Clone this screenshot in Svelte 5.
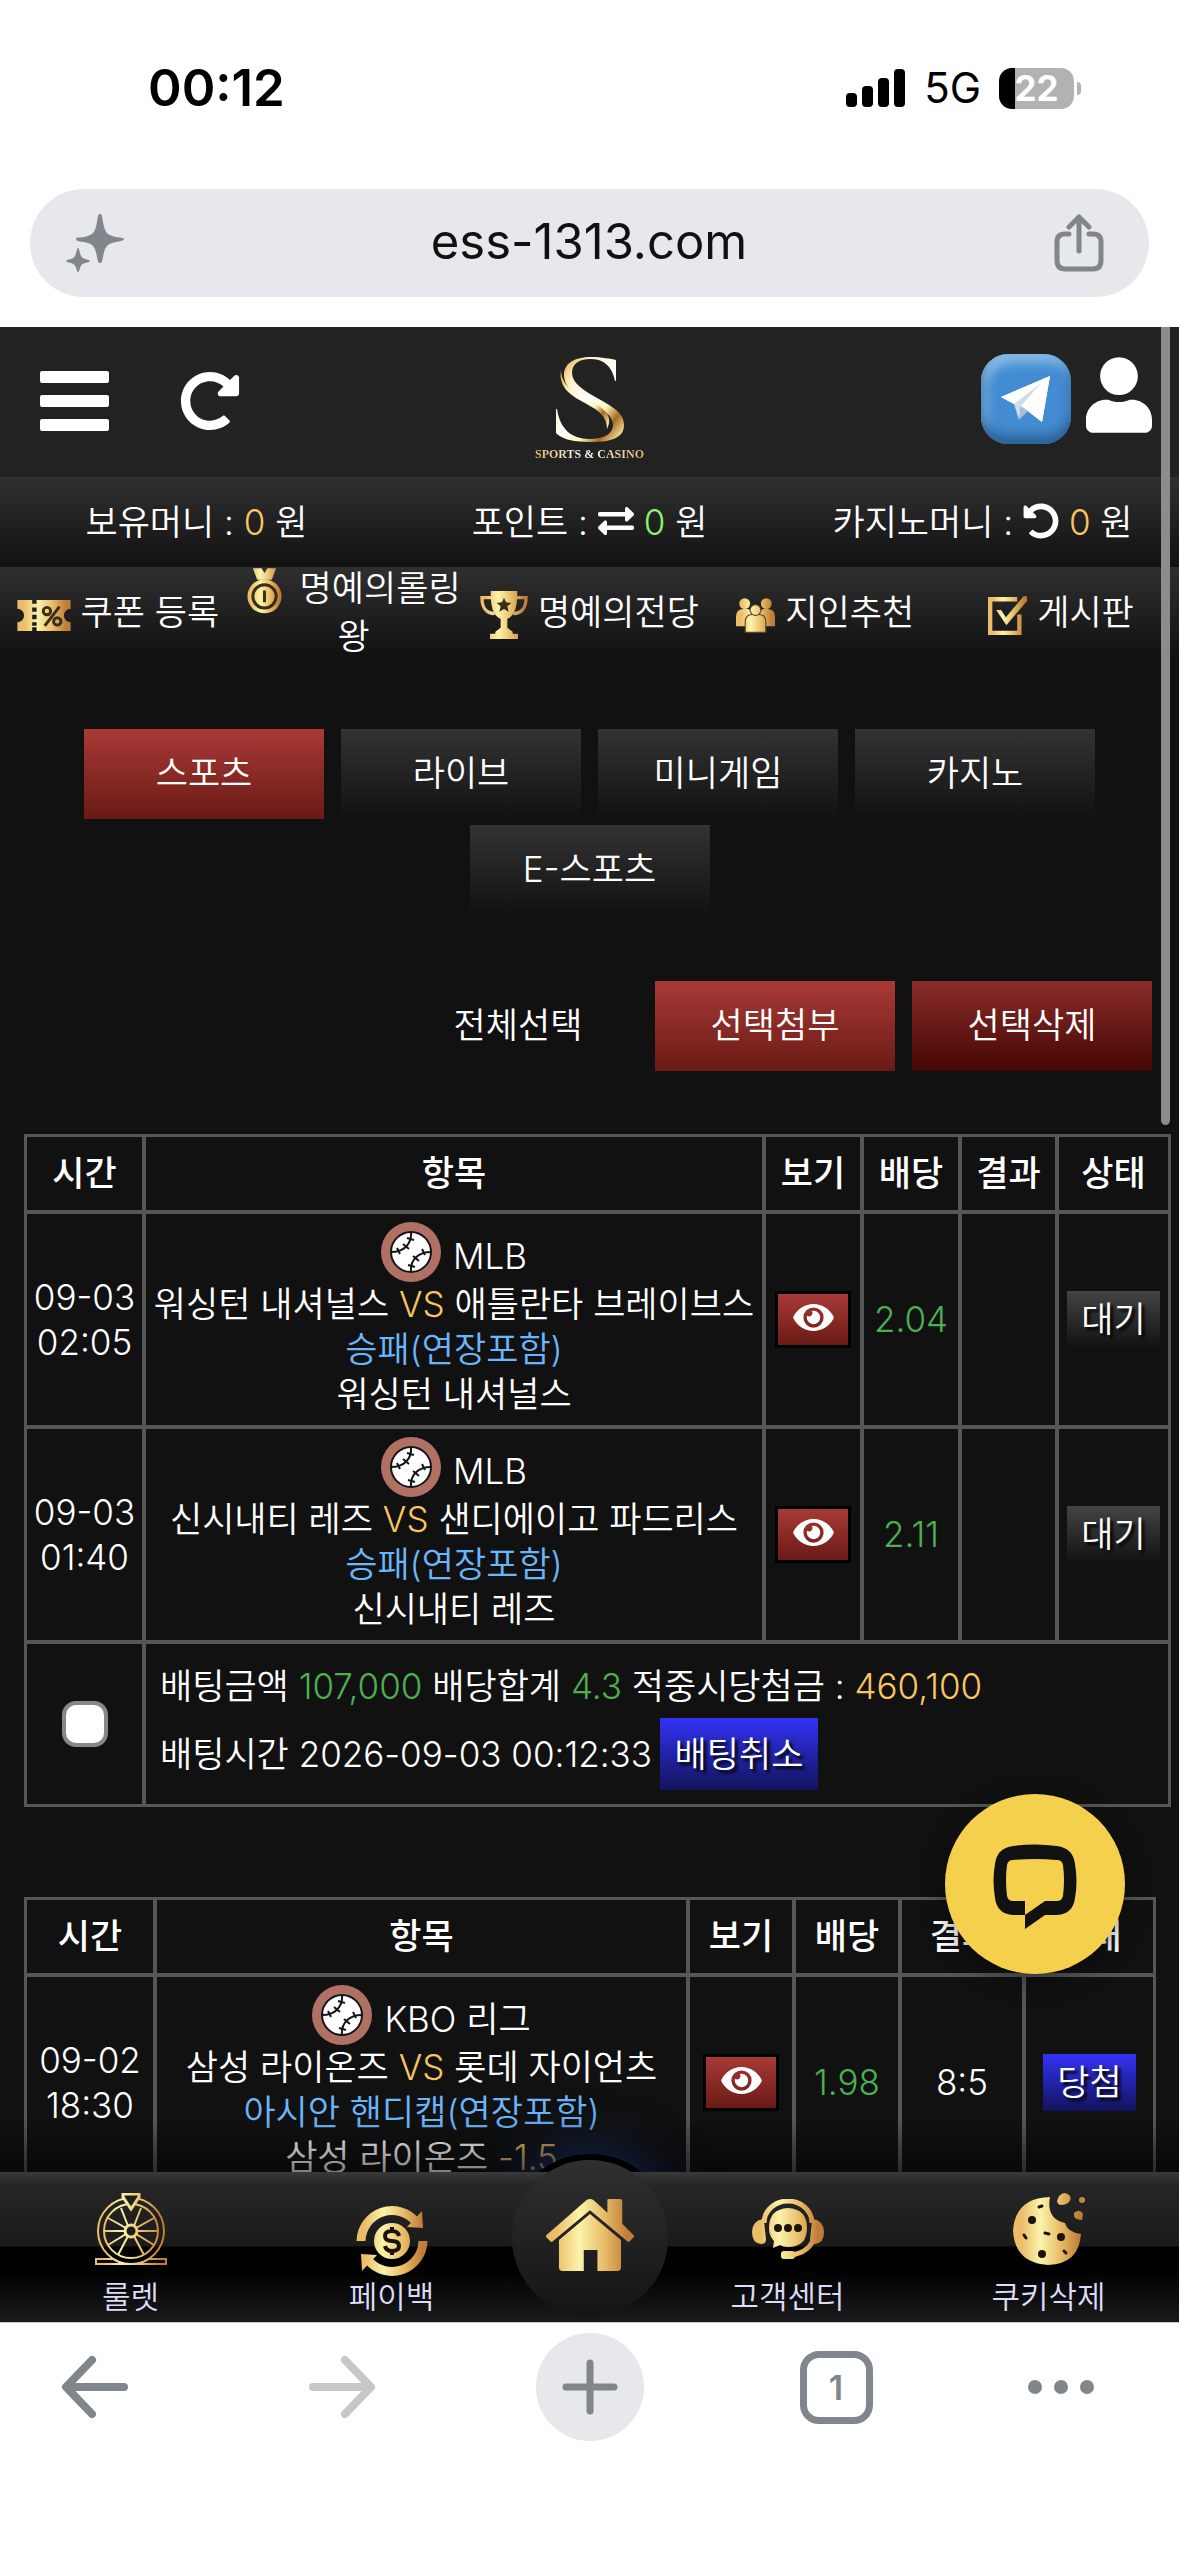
<script>
  const money = [
    { label: '보유머니 :', icon: '', value: '0', tone: 'gold' },
    { label: '포인트 :', icon: 'exchange', value: '0', tone: 'lime' },
    { label: '카지노머니 :', icon: 'undo', value: '0', tone: 'gold' }
  ];
  const menu = [
    { label: '쿠폰 등록', icon: 'coupon' },
    { label: '명예의롤링왕', icon: 'medal' },
    { label: '명예의전당', icon: 'trophy' },
    { label: '지인추천', icon: 'people' },
    { label: '게시판', icon: 'board' }
  ];
  const tabs = ['스포츠', '라이브', '미니게임', '카지노', 'E-스포츠'];
  let active = $state('스포츠');
  let picked = $state(false);

  const heads = [
    ['time', '시간'],
    ['item', '항목'],
    ['view', '보기'],
    ['odds', '배당'],
    ['result', '결과'],
    ['state', '상태']
  ];
  const slips = [
    {
      kind: 'open',
      rows: [
        { day: '09-03', hour: '02:05', league: 'MLB', home: '워싱턴 내셔널스', away: '애틀란타 브레이브스', market: '승패(연장포함)', pick: '워싱턴 내셔널스', line: '', odds: '2.04', result: '', state: '대기', tone: 'wait' },
        { day: '09-03', hour: '01:40', league: 'MLB', home: '신시내티 레즈', away: '샌디에이고 파드리스', market: '승패(연장포함)', pick: '신시내티 레즈', line: '', odds: '2.11', result: '', state: '대기', tone: 'wait' }
      ],
      total: { stake: '107,000', odds: '4.3', payout: '460,100', at: '2026-09-03 00:12:33' }
    },
    {
      kind: 'settled',
      rows: [
        { day: '09-02', hour: '18:30', league: 'KBO 리그', home: '삼성 라이온즈', away: '롯데 자이언츠', market: '아시안 핸디캡(연장포함)', pick: '삼성 라이온즈', line: '-1.5', odds: '1.98', result: '8:5', state: '당첨', tone: 'win' }
      ],
      total: null
    }
  ];
</script>

{#snippet undoIcon()}
  <svg class="i36" viewBox="0 0 512 512" aria-hidden="true"><path fill="#fff" d="M255.545 8c-66.269.119-126.438 26.233-170.86 68.685L48.971 40.971C33.851 25.851 8 36.559 8 57.941V192c0 13.255 10.745 24 24 24h134.059c21.382 0 32.09-25.851 16.971-40.971l-41.75-41.75c30.864-28.899 70.801-44.907 113.23-45.273 92.398-.798 170.283 73.977 169.484 169.442C423.236 348.009 349.816 424 256 424c-41.127 0-79.997-14.678-110.629-41.556-4.743-4.161-11.906-3.908-16.368.553L89.34 422.659c-4.872 4.872-4.631 12.815.482 17.433C133.798 479.813 192.074 504 256 504c136.966 0 247.999-111.033 248-247.998C504.001 119.193 392.354 7.755 255.545 8z" /></svg>
{/snippet}

{#snippet exchangeIcon()}
  <svg class="i36" viewBox="0 0 512 512" aria-hidden="true"><path fill="#fff" d="M0 168v-16c0-13.255 10.745-24 24-24h360V80c0-21.367 25.899-32.042 40.971-16.971l80 80c9.372 9.373 9.372 24.569 0 33.941l-80 80C409.956 271.982 384 261.456 384 240v-48H24c-13.255 0-24-10.745-24-24zm488 152H128v-48c0-21.314-25.862-32.08-40.971-16.971l-80 80c-9.372 9.373-9.372 24.569 0 33.941l80 80C102.057 463.997 128 453.437 128 432v-48h360c13.255 0 24-10.745 24-24v-16c0-13.255-10.745-24-24-24z" /></svg>
{/snippet}

{#snippet menuIcon(name)}
  {#if name === 'coupon'}
    <svg class="coupon" viewBox="0 0 72 42" aria-hidden="true">
      <path fill="url(#gold)" fill-rule="evenodd" d="M0 0h20v5h6V0h46v12a9 9 0 0 0 0 18v12H26v-5h-6v5H0V30a9 9 0 0 0 0-18zM20 10v6h6v-6zm0 10v6h6v-6zm0 10v5h6v-5z" />
      <g fill="none" stroke="#3a2c17" stroke-width="4"><circle cx="40" cy="15" r="5" /><circle cx="54" cy="29" r="5" /><path d="M57 9 37 35" /></g>
    </svg>
  {:else if name === 'medal'}
    <svg class="medal" viewBox="0 0 72 94" aria-hidden="true">
      <path fill="url(#gold)" d="M12 0h18l6 10 6-10h18l-9 24H21z" />
      <circle cx="36" cy="58" r="35" fill="url(#gold)" />
      <circle cx="36" cy="58" r="24" fill="none" stroke="#3a2c17" stroke-width="6" />
      <path stroke="#3a2c17" stroke-width="6" d="M36 46v24" />
    </svg>
  {:else if name === 'trophy'}
    <svg class="trophy" viewBox="0 0 72 72" aria-hidden="true">
      <path fill="none" stroke="url(#gold)" stroke-width="5" d="M18 10H3c0 16 6 23 19 24M54 10h15c0 16-6 23-19 24" />
      <path fill="url(#gold)" d="M16 0h40c0 24-3 36-15 42v13l8 6v3h8v8H15v-8h8v-3l8-6V42C19 36 16 24 16 0z" />
      <path fill="#3a2c17" d="m36 10 3 7 8 1-6 5 2 8-7-4-7 4 2-8-6-5 8-1z" />
    </svg>
  {:else if name === 'people'}
    <svg class="people" viewBox="0 0 72 64" aria-hidden="true">
      <g fill="url(#gold)"><circle cx="16" cy="10" r="10" /><circle cx="56" cy="10" r="10" /><path d="M0 52V34q0-14 14-14h6q8 0 8 10v22zM72 52V34q0-14-14-14h-6q-8 0-8 10v22z" /></g>
      <g fill="url(#gold)" stroke="#5b4320" stroke-width="2"><path d="M17 63V44q0-14 13-14h12q13 0 13 14v19z" /><circle cx="36" cy="22" r="10" /></g>
    </svg>
  {:else}
    <svg class="board" viewBox="0 0 72 72" aria-hidden="true">
      <path fill="none" stroke="url(#gold)" stroke-width="8" d="M58 34v34H4V6h50" />
      <path fill="url(#gold)" d="M15 26h9l9 13L66 0l6 1v8L34 54z" />
    </svg>
  {/if}
{/snippet}

{#snippet ball()}
  <svg class="ball" viewBox="0 0 60 60" aria-hidden="true">
    <circle cx="30" cy="30" r="30" fill="#b07164" />
    <circle cx="30" cy="30" r="20" fill="#fff" stroke="#151515" stroke-width="2" />
    <path fill="none" stroke="#151515" stroke-width="2" d="M30 10c1 12-7 20-20 20M30 50c-1-12 7-20 20-20M26 16l7 2M22 22l6 5M16 26l3 6M27 43l7 2M32 34l6 5M41 27l3 6" />
  </svg>
{/snippet}

{#snippet eye()}
  <svg class="eye" viewBox="0 64 576 384" aria-hidden="true"><path fill="#fff" d="M572.52 241.4C518.29 135.59 410.93 64 288 64S57.68 135.64 3.48 241.41a32.35 32.35 0 0 0 0 29.19C57.71 376.41 165.07 448 288 448s230.32-71.64 284.52-177.41a32.35 32.35 0 0 0 0-29.19zM288 400a144 144 0 1 1 144-144 143.93 143.93 0 0 1-144 144zm0-240a95.31 95.31 0 0 0-25.31 3.79 47.85 47.85 0 0 1-66.9 66.9A95.78 95.78 0 1 0 288 160z" /></svg>
{/snippet}

<svg class="defs" width="0" height="0" aria-hidden="true">
  <defs>
    <linearGradient id="gold" gradientUnits="userSpaceOnUse" x1="0" y1="0" x2="72" y2="0">
      <stop offset="0.12" stop-color="#ebbd69" />
      <stop offset="0.38" stop-color="#fbf3ab" />
      <stop offset="0.66" stop-color="#e8bc67" />
      <stop offset="0.92" stop-color="#bf7d38" />
    </linearGradient>
  </defs>
</svg>

<div class="phone">
  <header class="status">
    <time>00:12</time>
    <div class="signals">
      <svg width="60" height="38" viewBox="0 0 60 38" aria-hidden="true"><rect y="24" width="11" height="14" rx="4" /><rect x="16" y="17" width="11" height="21" rx="4" /><rect x="32" y="9" width="11" height="29" rx="4" /><rect x="48" width="11" height="38" rx="4" /></svg>
      <span class="net">5G</span>
      <span class="battery"><span>22</span></span>
    </div>
  </header>

  <div class="address">
    <button aria-label="AI">
      <svg width="58" height="58" viewBox="0 0 58 58" aria-hidden="true"><path fill="#80868b" d="M34 0c2 0 2 2 3 8 2 11 4 13 13 15 6 1 8 1 8 2s-2 2-8 3c-9 2-11 4-13 15-1 4-1 6-3 6s-2-2-3-6c-2-11-4-13-13-15-6-1-8-1-8-3s2-1 8-2c9-2 11-4 13-15 1-6 1-8 3-8zM12 34c1 0 1 2 2 5 1 4 2 5 5 6s5 1 5 2-2 1-5 2-4 2-5 5-1 4-2 4-1-2-2-4c-1-3-2-4-5-5s-5-1-5-2 2-1 5-2 4-2 5-6c1-3 1-5 2-5z" /></svg>
    </button>
    <span>ess-1313.com</span>
    <button aria-label="공유">
      <svg width="50" height="58" viewBox="0 0 50 58" fill="none" stroke="#80868b" stroke-width="5" stroke-linecap="round" stroke-linejoin="round" aria-hidden="true"><path d="M15 20h-4q-8 0-8 8v18q0 9 8 9h28q8 0 8-9V28q0-8-8-8h-4M25 37V4M15 13 25 3l10 10" /></svg>
    </button>
  </div>

  <main class="site">
    <header class="top">
      <div class="left">
        <button aria-label="메뉴">
          <svg width="70" height="60" viewBox="0 0 70 60" fill="#fff" aria-hidden="true"><rect width="69" height="12" rx="2" /><rect y="24" width="69" height="12" rx="2" /><rect y="48" width="69" height="12" rx="2" /></svg>
        </button>
        <button aria-label="새로고침">
          <svg width="60" height="60" viewBox="0 0 512 512" aria-hidden="true"><path fill="#fff" d="M256.455 8c66.269.119 126.437 26.233 170.859 68.685l35.715-35.715C478.149 25.851 504 36.559 504 57.941V192c0 13.255-10.745 24-24 24H345.941c-21.382 0-32.09-25.851-16.971-40.971l41.75-41.75c-30.864-28.899-70.801-44.907-113.23-45.273-92.398-.798-170.283 73.977-169.484 169.442C88.764 348.009 162.184 424 256 424c41.127 0 79.997-14.678 110.629-41.556 4.743-4.161 11.906-3.908 16.368.553l39.662 39.662c4.872 4.872 4.631 12.815-.482 17.433C378.202 479.813 319.926 504 256 504 119.034 504 8.001 392.967 8 256.002 7.999 119.193 119.646 7.755 256.455 8z" /></svg>
        </button>
      </div>
      <a class="logo" href="#home">
        <svg width="80" height="90" viewBox="0 0 80 90" aria-hidden="true">
          <defs>
            <linearGradient id="logoGold" x1="0" y1="0" x2="1" y2="1">
              <stop offset="0.1" stop-color="#e9b65c" /><stop offset="0.25" stop-color="#fff3c9" /><stop offset="0.5" stop-color="#fff" /><stop offset="0.66" stop-color="#fff6c0" /><stop offset="0.8" stop-color="#a86b25" /><stop offset="0.95" stop-color="#fbe9a0" />
            </linearGradient>
          </defs>
          <g fill="url(#logoGold)">
            <path d="M66 5v21h-1C62 11 54 4 40 4 29 4 22 9 22 18c0 10 11 17 25 25 15 8 27 15 27 27 0 13-13 17-33 17C20 87 11 83 6 78V54h1c3 19 13 30 33 30 13 0 23-5 23-14 0-9-10-16-24-23C25 39 14 32 14 20 14 8 25 2 41 2c11 0 20 2 25 3z" />
            <path d="M11 15C8 33 22 41 35 48c14 8 22 13 22 26 7-13-3-21-18-29C25 38 11 30 11 15z" />
          </g>
        </svg>
        <span>SPORTS &amp; CASINO</span>
      </a>
      <div class="right">
        <a class="telegram" href="#telegram" aria-label="텔레그램">
          <svg width="50" height="46" viewBox="0 0 50 46" aria-hidden="true"><path fill="#fff" d="M0 21 49 0 41 46 27 35z" /><path fill="#cfdcea" d="M0 21 40 7 20 30l-2 14-5-16z" /><path fill="#fff" d="M0 21 49 0 13 28zM20 30 49 0 41 46z" /><path fill="#a9bfd4" d="m20 30 7 5-9 9z" /></svg>
        </a>
        <a href="#mypage" aria-label="내 정보">
          <svg width="66" height="76" viewBox="0 0 448 512" aria-hidden="true"><path fill="#fff" d="M224 256c70.7 0 128-57.3 128-128S294.7 0 224 0 96 57.3 96 128s57.3 128 128 128zm89.6 32h-16.7c-22.2 10.2-46.9 16-72.9 16s-50.6-5.8-72.9-16h-16.7C60.2 288 0 348.2 0 422.4V464c0 26.5 21.5 48 48 48h352c26.5 0 48-21.5 48-48v-41.6c0-74.2-60.2-134.4-134.4-134.4z" /></svg>
        </a>
      </div>
    </header>

    <div class="money">
      {#each money as m}
        <div>
          {m.label}
          {#if m.icon === 'exchange'}{@render exchangeIcon()}{:else if m.icon === 'undo'}{@render undoIcon()}{/if}
          <span class={m.tone}>{m.value}</span>
          원
        </div>
      {/each}
    </div>

    <nav class="menu">
      {#each menu as m}
        <a href="#{m.icon}"><span>{@render menuIcon(m.icon)} {m.label}</span></a>
      {/each}
    </nav>

    <div class="tabs">
      {#each tabs as t}
        <button class="tab" class:active={t === active} onclick={() => (active = t)}>{t}</button>
      {/each}
    </div>

    <div class="actions">
      <button class="tab plain">전체선택</button>
      <button class="tab active">선택첨부</button>
      <button class="tab danger">선택삭제</button>
    </div>

    {#each slips as slip}
      <table class={slip.kind}>
        <thead>
          <tr>
            {#each heads as [key, name]}<th class={key} scope="col">{name}</th>{/each}
          </tr>
        </thead>
        <tbody>
          {#each slip.rows as r}
            <tr>
              <td>{r.day}<br />{r.hour}</td>
              <td>
                <div class="league">{@render ball()}<span>{r.league}</span></div>
                <div class="line">{r.home} <span class="gold">VS</span> {r.away}</div>
                <div class="line blue">{r.market}</div>
                <div class="line">{r.pick} <span class="gold">{r.line}</span></div>
              </td>
              <td><button class="view-btn" aria-label="보기">{@render eye()}</button></td>
              <td class="green">{r.odds}</td>
              <td>{r.result}</td>
              <td><span class="badge {r.tone}">{r.state}</span></td>
            </tr>
          {/each}
          {#if slip.total}
            <tr class="total">
              <td><input type="checkbox" aria-label="배팅 선택" bind:checked={picked} /></td>
              <td colspan="5">
                <div class="sum">배팅금액 <span class="green">{slip.total.stake}</span> 배당합계 <span class="green">{slip.total.odds}</span> 적중시당첨금 : <span class="gold">{slip.total.payout}</span></div>
                <div class="when">배팅시간 {slip.total.at} <button class="cancel">배팅취소</button></div>
              </td>
            </tr>
          {/if}
        </tbody>
      </table>
    {/each}

    <div class="scrollbar"></div>

    <button class="chat" aria-label="채팅 상담">
      <svg width="84" height="86" viewBox="0 0 84 86" aria-hidden="true"><path fill="#111" fill-rule="evenodd" d="M20 2q22-3 44 0 16 2 18 18 3 18 0 34-2 16-18 17H52L32 85V57H20q-5 0-6-5-2-16 0-31 1-5 6-5 22-2 44 0 5 0 6 5 2 15 0 31-1 5-6 5H52L32 71H20Q4 70 2 54-1 36 2 20 4 4 20 2z" /></svg>
    </button>

    <div class="dock">
      <div class="ring"></div>
      <nav class="bar">
        <a href="#roulette">
          <svg width="72" height="72" viewBox="0 0 72 72" fill="none" stroke="url(#gold)" stroke-width="2" aria-hidden="true">
            <path d="M1 66h17q18 11 36 0h17v5H1z" fill="#0a0a0a" />
            <circle cx="36" cy="38" r="33" /><circle cx="36" cy="38" r="27" /><circle cx="36" cy="38" r="6" stroke-width="3" />
            <path d="M42 38h21M9 38h21M41 41l18 11M31 35 13 25M39 43l10 19M33 43 23 62M41 35l18-10M31 41 13 52M39 33l7-18M33 33l-7-18" />
            <path d="M28 1h16v3l-8 12-8-12z" fill="#1c1c1c" stroke-width="3" />
          </svg>
          <span>룰렛</span>
        </a>
        <a href="#payback" class="low">
          <svg width="72" height="72" viewBox="0 0 72 72" aria-hidden="true">
            <g fill="none" stroke="url(#gold)" stroke-width="9"><path d="M5 36A31 31 0 0 1 60 17M67 36A31 31 0 0 1 12 55" /></g>
            <path fill="url(#gold)" d="m66 6 1 17-16-1zM6 66 5 49l16 1z" />
            <circle cx="36" cy="36" r="18" fill="url(#gold)" />
            <path fill="none" stroke="#1a1408" stroke-width="4" d="M43 31q-1-5-7-5-7 0-7 5t7 5 7 5-7 5q-6 0-7-5M36 22v5M36 45v5" />
          </svg>
          <span>페이백</span>
        </a>
        <a href="#home" class="home" aria-label="홈">
          <svg width="90" height="72" viewBox="0 0 72 58" aria-hidden="true">
            <path fill="url(#gold)" d="M33 1q3-2 6 0l11 10V1q0-1 1-1h9q2 0 2 2v18l9 9q1 1 0 2l-3 3q-1 1-2 0L36 9 6 34q-1 1-2 0l-3-3q-1-1 0-2z" />
            <path fill="url(#gold)" d="M36 12 61 33v22q0 3-3 3H42V41H31v17H14q-3 0-3-3V33z" />
          </svg>
        </a>
        <a href="#support" class="mid">
          <svg width="72" height="60" viewBox="0 0 72 60" aria-hidden="true">
            <path fill="none" stroke="url(#gold)" stroke-width="5" d="M12 24a24 22 0 0 1 48 0M61 42q-6 12-22 14" />
            <path fill="url(#gold)" d="M11 20Q0 22 0 33t9 12q5 0 5-5l-2-18zM61 20q11 2 11 13t-9 12q-5 0-5-5l2-18z" />
            <path fill="url(#gold)" d="M36 9q19 1 19 20T36 48q-5 0-8-2l-7 3 1-7q-5-5-5-13Q17 10 36 9z" />
            <rect x="29" y="52" width="14" height="8" rx="3" fill="url(#gold)" />
            <g fill="#1c1608"><circle cx="26" cy="29" r="4" /><circle cx="36" cy="29" r="4" /><circle cx="46" cy="29" r="4" /></g>
          </svg>
          <span>고객센터</span>
        </a>
        <a href="#cookies">
          <svg width="72" height="72" viewBox="0 0 72 72" aria-hidden="true">
            <path fill="url(#gold)" d="M37 4q-4 22 15 26 2 9 16 11-2 30-33 31Q2 70 0 38 2 5 37 4zM46 3q6-6 11 0 2 5-4 8-8 3-9-3zM61 20q6-5 9 1l-1 6q-9 0-8-7z" />
            <circle cx="69" cy="7" r="3" fill="#c58540" />
            <g fill="#1a1408"><circle cx="19" cy="27" r="4" /><circle cx="48" cy="44" r="4" /><circle cx="29" cy="61" r="4" /></g>
            <path stroke="#1a1408" stroke-width="3" stroke-linecap="round" d="m26 14 3-1M32 40l4 1M11 42l2 3M51 58l2 2" />
          </svg>
          <span>쿠키삭제</span>
        </a>
      </nav>
    </div>
  </main>

  <footer class="toolbar">
    <button aria-label="뒤로"><svg width="68" height="64" viewBox="0 0 68 64" fill="none" stroke="#80868b" stroke-width="8" stroke-linecap="round" stroke-linejoin="round" aria-hidden="true"><path d="M63 32H6M31 5 5 32l26 27" /></svg></button>
    <button aria-label="앞으로"><svg width="68" height="64" viewBox="0 0 68 64" fill="none" stroke="#c7c7c7" stroke-width="8" stroke-linecap="round" stroke-linejoin="round" aria-hidden="true"><path d="M5 32h57M37 5l26 27-26 27" /></svg></button>
    <button class="plus" aria-label="새 탭"><svg width="56" height="56" viewBox="0 0 56 56" stroke="#80868b" stroke-width="7" stroke-linecap="round" aria-hidden="true"><path d="M28 4v48M4 28h48" /></svg></button>
    <button class="count" aria-label="탭 1개">1</button>
    <button aria-label="더보기"><svg width="68" height="16" viewBox="0 0 68 16" fill="#80868b" aria-hidden="true"><circle cx="8" cy="8" r="7" /><circle cx="34" cy="8" r="7" /><circle cx="60" cy="8" r="7" /></svg></button>
  </footer>
</div>

<style>
  :global(body) {
    margin: 0;
    background: #fff;
  }
  .defs {
    position: absolute;
  }
  .phone {
    display: flex;
    flex-direction: column;
    height: 100vh;
    overflow: hidden;
    background: #fff;
    font-family: 'Inter', 'Noto Sans CJK KR', sans-serif;
  }
  .phone :global(svg) {
    flex: none;
  }
  button {
    padding: 0;
    border: 0;
    background: none;
    color: inherit;
    font: inherit;
  }
  a {
    color: inherit;
    text-decoration: none;
  }

  .status {
    display: flex;
    justify-content: space-between;
    align-items: center;
    padding: 56px 105px 69px 148px;
    line-height: 64px;
  }
  .status time {
    font-size: 51px;
    font-weight: 600;
  }
  .signals {
    display: flex;
    align-items: center;
    gap: 18px;
  }
  .net {
    font-size: 42px;
    font-weight: 400;
  }
  .battery {
    position: relative;
    display: flex;
    justify-content: center;
    width: 75px;
    border-radius: 13px;
    background: linear-gradient(90deg, #000 22%, #b2b2b2 22%);
    color: #fff;
    font-size: 35px;
    font-weight: 700;
    line-height: 41px;
  }
  .battery::after {
    content: '';
    position: absolute;
    left: 78px;
    top: 14px;
    width: 4px;
    height: 13px;
    border-radius: 0 4px 4px 0;
    background: #b2b2b2;
  }
  .address {
    display: flex;
    justify-content: space-between;
    align-items: center;
    height: 108px;
    margin: 0 30px 30px;
    padding: 0 45px 0 36px;
    border-radius: 54px;
    background: #e7e8ec;
    color: #111;
    font-size: 49px;
  }
  .address button {
    display: flex;
  }
  .address span {
    padding-bottom: 4px;
  }

  .site {
    position: relative;
    flex: 1;
    min-height: 0;
    overflow: hidden;
    background: #111;
    color: #fff;
    font-family: 'Inter', 'Noto Sans CJK KR', sans-serif;
    font-size: 35px;
    font-weight: 350;
  }
  .gold {
    color: #f9c563;
  }
  .lime {
    color: #86f56c;
  }
  .green {
    color: #4caf50;
  }
  .blue {
    color: #6ab6fa;
  }

  .top {
    display: grid;
    grid-template-columns: 1fr auto 1fr;
    height: 150px;
    background: #222;
  }
  .left {
    display: flex;
    align-items: center;
    gap: 70px;
    padding: 0 0 2px 40px;
  }
  .left button {
    display: flex;
  }
  .logo {
    display: flex;
    flex-direction: column;
    align-items: center;
    padding-top: 28px;
  }
  .logo span {
    background: linear-gradient(90deg, #e4b462, #fff 45%, #e4b462);
    background-clip: text;
    color: transparent;
    font-family: 'Liberation Serif', serif;
    font-size: 12px;
    font-weight: 700;
    line-height: 18px;
    white-space: nowrap;
  }
  .right {
    display: flex;
    justify-content: flex-end;
    align-items: flex-start;
    gap: 15px;
    padding: 27px 27px 0 0;
  }
  .right a {
    display: flex;
  }
  .right .telegram {
    align-items: center;
    justify-content: center;
    width: 90px;
    height: 90px;
    border-radius: 27px;
    background: #448cd1;
    box-shadow: inset 0 -8px 12px #2a5f95, inset 5px 8px 12px #8fc0ea;
  }
  .right a:last-child {
    padding-top: 3px;
  }

  .money {
    display: grid;
    grid-template-columns: repeat(3, 1fr);
    background: linear-gradient(#303030, #111);
    line-height: 90px;
    text-align: center;
    white-space: nowrap;
  }
  .i36 {
    width: 36px;
    height: 36px;
    vertical-align: -4px;
  }
  .menu {
    display: grid;
    grid-template-columns: repeat(5, 1fr);
    grid-template-rows: 90px;
    background: linear-gradient(#2f2f2f, #111);
    line-height: 48px;
    text-align: center;
  }
  .menu a {
    display: flex;
    align-items: center;
    justify-content: center;
    min-width: 0;
  }
  .menu svg {
    margin-block: -12px;
    vertical-align: middle;
  }
  .coupon {
    width: 54px;
    height: 31px;
  }
  .medal {
    width: 35px;
    height: 46px;
    margin-right: 8px;
  }
  .trophy {
    width: 48px;
    height: 48px;
  }
  .people {
    width: 39px;
    height: 35px;
  }
  .board {
    width: 39px;
    height: 39px;
  }

  .tabs {
    display: flex;
    flex-wrap: wrap;
    justify-content: center;
    gap: 6px 17px;
    padding: 72px 27px 66px;
  }
  .actions {
    display: flex;
    justify-content: flex-end;
    gap: 17px;
    padding: 0 27px 63px;
  }
  .tab {
    width: 240px;
    height: 90px;
    padding-bottom: 8px;
    background: linear-gradient(#333, #111);
  }
  .tab.active {
    background: linear-gradient(#a83a36, #6a1a15);
  }
  .tab.danger {
    background: linear-gradient(#8a2c28, #450704);
  }
  .tab.plain {
    background: none;
  }

  table {
    table-layout: fixed;
    width: calc(100% - 32px);
    margin: 0 8px 90px 24px;
    border: 3px solid #565656;
    border-collapse: separate;
    border-spacing: 0;
    line-height: 45px;
    text-align: center;
  }
  table.settled {
    width: calc(100% - 47px);
  }
  th,
  td {
    padding: 0;
    border: solid #565656;
    border-width: 0 4px 4px 0;
  }
  th:last-child,
  td:last-child {
    border-right: 0;
  }
  .total td {
    border-bottom: 0;
  }
  th {
    height: 73px;
    font-weight: 500;
  }
  .open .time {
    width: 115px;
  }
  .open .view,
  .open .odds {
    width: 94px;
  }
  .open .result {
    width: 93px;
  }
  .open .state {
    width: 109px;
  }
  .settled .time {
    width: 126px;
  }
  .settled .view,
  .settled .odds {
    width: 102px;
  }
  .settled .result {
    width: 120px;
  }
  .settled .state {
    width: 127px;
  }
  .league {
    display: flex;
    justify-content: center;
    align-items: center;
    gap: 12px;
    padding-top: 8px;
  }
  .league span {
    padding-top: 8px;
  }
  .ball {
    width: 60px;
    height: 60px;
  }
  .line {
    white-space: nowrap;
  }
  .line:last-child {
    padding-bottom: 8px;
  }
  .view-btn {
    display: flex;
    justify-content: center;
    align-items: center;
    width: 76px;
    height: 57px;
    margin: 0 auto;
    padding-bottom: 4px;
    border: 3px solid #000;
    background: linear-gradient(#a83a36, #6a1a15);
  }
  .eye {
    width: 41px;
    height: 27px;
  }
  .badge {
    display: inline-block;
    width: 93px;
    line-height: 57px;
    text-shadow: 3px 3px 3px #000;
    vertical-align: middle;
  }
  .wait {
    background: linear-gradient(#444, #111);
  }
  .win,
  .cancel {
    background: linear-gradient(#3232f6, #13135c);
  }
  .total td:last-child {
    padding: 20px 14px 14px;
    text-align: left;
  }
  .when {
    display: flex;
    align-items: center;
    gap: 8px;
    margin-top: 9px;
  }
  .cancel {
    width: 158px;
    height: 72px;
    text-shadow: 3px 3px 3px #000;
  }
  input[type='checkbox'] {
    appearance: none;
    display: block;
    width: 46px;
    height: 46px;
    margin: 0 auto;
    border: 4px solid #88888c;
    border-radius: 14px;
    background: #fff;
  }

  .scrollbar {
    position: absolute;
    top: 0;
    right: 9px;
    width: 9px;
    height: 40%;
    border-radius: 0 0 5px 5px;
    background: #8c8c8c;
  }
  .chat {
    position: absolute;
    right: 54px;
    bottom: 348px;
    display: flex;
    justify-content: center;
    align-items: center;
    width: 180px;
    height: 180px;
    padding-top: 5px;
    border-radius: 50%;
    background: #f5d04c;
    box-shadow: 0 6px 24px rgba(0, 0, 0, 0.4);
  }

  .dock {
    position: absolute;
    right: 0;
    bottom: 0;
    left: 0;
    isolation: isolate;
  }
  .dock::before {
    content: '';
    position: absolute;
    right: 0;
    bottom: 100%;
    left: 0;
    height: 54px;
    background: linear-gradient(transparent, rgba(0, 0, 0, 0.5));
  }
  .ring {
    position: absolute;
    left: calc(50% - 84px);
    bottom: 0;
    width: 168px;
    height: 168px;
    border-radius: 50%;
    background: #000;
    box-shadow: 0 0 54px #14285a;
  }
  .bar {
    position: relative;
    display: grid;
    grid-template-columns: 1fr 1fr 135px 1fr 1fr;
    height: 150px;
    background: linear-gradient(#3a3a3a, #262626 12px, #1b1b1b 74px, #000 75px, #000 96px, #1a1a1a);
    color: #dddcfa;
    font-size: 31px;
    line-height: 45px;
  }
  .bar a {
    display: flex;
    flex-direction: column;
    justify-content: space-between;
    align-items: center;
    padding: 21px 0 3px;
  }
  .bar .low {
    padding-top: 33px;
  }
  .bar .low span {
    margin-top: -6px;
  }
  .bar .mid {
    padding-top: 27px;
  }
  .bar .home {
    justify-content: flex-start;
    width: 156px;
    height: 156px;
    margin: -12px -10px 0;
    padding: 39px 0 0;
    box-sizing: border-box;
    border-radius: 50%;
    background: linear-gradient(#303030, #141414);
  }

  .toolbar {
    display: grid;
    grid-template-columns: 190fr 304fr 192fr 300fr 150fr;
    justify-items: center;
    align-items: center;
    height: 108px;
    padding: 10px 43px 115px 0;
    border-top: 1px solid #c8c8c8;
  }
  .toolbar button {
    display: flex;
    justify-content: center;
    align-items: center;
  }
  .toolbar .plus {
    width: 108px;
    height: 108px;
    border-radius: 50%;
    background: #e7e8ec;
  }
  .toolbar .count {
    box-sizing: border-box;
    width: 73px;
    height: 73px;
    border: 7px solid #80868b;
    border-radius: 19px;
    color: #80868b;
    font-size: 34px;
    font-weight: 600;
  }
</style>
